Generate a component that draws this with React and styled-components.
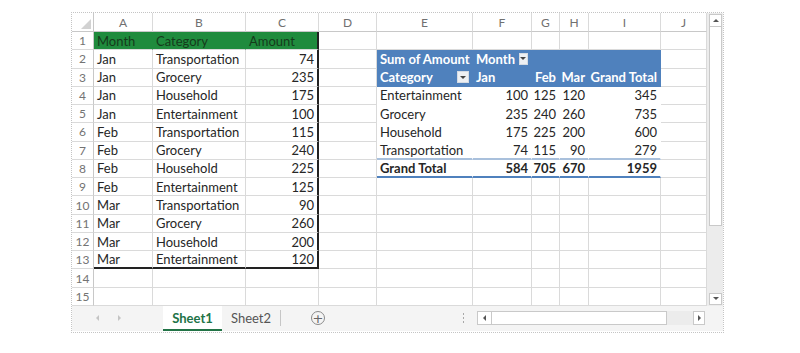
import React from 'react';
import styled, { createGlobalStyle, css } from 'styled-components';

const GlobalStyle = createGlobalStyle`
  html, body {
    margin: 0;
    padding: 0;
    background: #fff;
  }
  body {
    font-family: Lato, "Liberation Sans", sans-serif;
  }
`;

const GRID = '#dadada';
const BLUE = '#4f81bd';

const Page = styled.div`
  width: 800px;
  height: 353px;
  padding: 12px 0 0 71px;
  box-sizing: border-box;
`;

const Workbook = styled.div`
  width: 653px;
  height: 321px;
  box-sizing: border-box;
  border: 1px dotted #c4c4c4;
  display: flex;
  flex-direction: column;
  background: #fff;
`;

const Body = styled.div`
  display: flex;
`;

const Grid = styled.div`
  display: grid;
  grid-template-columns: 22px 59px 93px 73px 58px 96px 59px 28px 29px 72px 46px;
  grid-template-rows: 19px repeat(15, 18.27px);
`;

const Corner = styled.div`
  box-sizing: border-box;
  display: flex;
  align-items: flex-end;
  justify-content: flex-end;
  padding: 0 2px 2px 0;
  border-right: 1px solid #c8c8c8;
  border-bottom: 1px solid #c8c8c8;
`;

const CornerMark = styled.span`
  width: 0;
  height: 0;
  border-left: 10px solid transparent;
  border-bottom: 10px solid #d2d2d2;
`;

const ColHead = styled.div`
  box-sizing: border-box;
  display: flex;
  align-items: center;
  justify-content: center;
  font-size: 12px;
  color: #707070;
  border-right: 1px solid ${GRID};
  border-bottom: 1px solid #c8c8c8;
`;

const RowHead = styled.div`
  box-sizing: border-box;
  display: flex;
  align-items: center;
  justify-content: center;
  font-size: 12px;
  color: #737373;
  border-right: 1px solid #c8c8c8;
  border-bottom: 1px solid ${GRID};
`;

const Cell = styled.div`
  box-sizing: border-box;
  display: flex;
  align-items: center;
  justify-content: ${(p) => (p.$align === 'right' ? 'flex-end' : p.$align === 'between' ? 'space-between' : 'flex-start')};
  gap: 4px;
  padding: 0 3px;
  font-size: 13px;
  white-space: nowrap;
  color: #262626;
  background: #fff;
  border-right: 1px solid ${GRID};
  border-bottom: 1px solid ${GRID};
  font-weight: ${(p) => (p.$bold ? 700 : 400)};

  ${(p) => p.$variant === 'green' && css`
    background: #1f8b3d;
    color: #153a1b;
    border-right-color: #1f8b3d;
  `}
  ${(p) => p.$variant === 'pivotHead' && css`
    background: ${BLUE};
    color: #fff;
    font-weight: 700;
    border-right-color: ${BLUE};
    border-bottom-color: ${BLUE};
  `}
  ${(p) => p.$variant === 'pivotBody' && css`
    border-right-color: #fff;
    border-bottom-color: #fff;
  `}
  ${(p) => p.$variant === 'pivotLast' && css`
    border-right-color: #fff;
    border-bottom: 2px solid #a9c0dc;
  `}
  ${(p) => p.$variant === 'pivotTotal' && css`
    font-weight: 700;
    border-right-color: #fff;
    border-bottom: 2px solid ${BLUE};
  `}
  ${(p) => p.$thickRight && css`
    border-right: 2px solid #222;
  `}
  ${(p) => p.$thickBottom && css`
    border-bottom: 2px solid #222;
  `}
`;

const Dropdown = styled.span`
  box-sizing: border-box;
  width: 12px;
  height: 12px;
  background: #eef0f3;
  border: 1px solid #d5dbe3;
  display: flex;
  align-items: center;
  justify-content: center;

  &::after {
    content: '';
    width: 0;
    height: 0;
    border-left: 3px solid transparent;
    border-right: 3px solid transparent;
    border-top: 3px solid #444;
  }
`;

const VScroll = styled.div`
  width: 16px;
  box-sizing: border-box;
  display: flex;
  flex-direction: column;
  align-items: center;
  padding: 1px 0 1px 1px;
  background: #ececec;
`;

const ScrollBtn = styled.div`
  box-sizing: border-box;
  width: ${(p) => p.$w || 13}px;
  height: ${(p) => p.$h || 13}px;
  background: #fff;
  border: 1px solid #c9c9c9;
  display: flex;
  align-items: center;
  justify-content: center;
  flex-shrink: 0;

  &::after {
    content: '';
    width: 0;
    height: 0;
    ${(p) => p.$dir === 'up' && css`
      border-left: 3px solid transparent;
      border-right: 3px solid transparent;
      border-bottom: 3px solid #555;
    `}
    ${(p) => p.$dir === 'down' && css`
      border-left: 3px solid transparent;
      border-right: 3px solid transparent;
      border-top: 3px solid #555;
    `}
    ${(p) => p.$dir === 'left' && css`
      border-top: 3px solid transparent;
      border-bottom: 3px solid transparent;
      border-right: 3px solid #555;
    `}
    ${(p) => p.$dir === 'right' && css`
      border-top: 3px solid transparent;
      border-bottom: 3px solid transparent;
      border-left: 3px solid #555;
    `}
  }
`;

const VThumb = styled.div`
  box-sizing: border-box;
  width: 13px;
  height: 199px;
  background: #fff;
  border: 1px solid #c9c9c9;
  border-top: none;
`;

const Spacer = styled.div`
  flex: 1;
`;

const TabBar = styled.div`
  height: 25px;
  display: flex;
  align-items: stretch;
  background: #f4f4f4;
`;

const Nav = styled.div`
  width: 91px;
  display: flex;
  align-items: center;
  gap: 19px;
  padding-left: 24px;
  box-sizing: border-box;
`;

const NavArrow = styled.span`
  width: 0;
  height: 0;
  border-top: 3px solid transparent;
  border-bottom: 3px solid transparent;
  ${(p) => (p.$dir === 'left'
    ? css`border-right: 3px solid #c4c4c4;`
    : css`border-left: 3px solid #c4c4c4;`)}
`;

const Tab = styled.div`
  width: ${(p) => p.$w}px;
  box-sizing: border-box;
  display: flex;
  align-items: center;
  justify-content: center;
  font-size: 13px;
  ${(p) => (p.$active
    ? css`
      background: #fff;
      color: #217346;
      font-weight: 700;
      border-bottom: 2px solid #217346;
      padding-top: 2px;
    `
    : css`
      color: #555;
    `)}
`;

const TabSep = styled.span`
  width: 1px;
  align-self: center;
  height: 16px;
  background: #c6c6c6;
`;

const AddSheet = styled.div`
  align-self: center;
  margin-left: 30px;
  width: 14px;
  height: 14px;
  box-sizing: border-box;
  border: 1px solid #8a8a8a;
  border-radius: 50%;
  display: flex;
  align-items: center;
  justify-content: center;
  color: #666;
  font-size: 13px;
  line-height: 1;
  font-family: "DejaVu Sans", sans-serif;
`;

const Dots = styled.div`
  align-self: center;
  display: flex;
  flex-direction: column;
  gap: 2px;
  margin-right: 13px;

  span {
    width: 1px;
    height: 2px;
    background: #a8a8a8;
  }
`;

const HScroll = styled.div`
  align-self: center;
  width: 228px;
  height: 14px;
  margin-right: 18px;
  display: flex;
  background: #ececec;
`;

const HThumb = styled.div`
  width: 175px;
  box-sizing: border-box;
  background: #fff;
  border: 1px solid #c9c9c9;
  border-left: none;
`;

const colHeads = ['A', 'B', 'C', 'D', 'E', 'F', 'G', 'H', 'I', 'J'];

const records = [
  ['Jan', 'Transportation', 74],
  ['Jan', 'Grocery', 235],
  ['Jan', 'Household', 175],
  ['Jan', 'Entertainment', 100],
  ['Feb', 'Transportation', 115],
  ['Feb', 'Grocery', 240],
  ['Feb', 'Household', 225],
  ['Feb', 'Entertainment', 125],
  ['Mar', 'Transportation', 90],
  ['Mar', 'Grocery', 260],
  ['Mar', 'Household', 200],
  ['Mar', 'Entertainment', 120],
];

const pivot = [
  ['Entertainment', 100, 125, 120, 345],
  ['Grocery', 235, 240, 260, 735],
  ['Household', 175, 225, 200, 600],
  ['Transportation', 74, 115, 90, 279],
  ['Grand Total', 584, 705, 670, 1959],
];

// describe what sits in row r (1-based), column c (0 = A)
const cellFor = (r, c) => {
  const cell = { text: '', align: 'left' };

  // source table A1:C13
  if (c <= 2 && r <= 13) {
    if (r === 1) {
      cell.text = ['Month', 'Category', 'Amount'][c];
      cell.variant = 'green';
    } else {
      cell.text = records[r - 2][c];
      if (c === 2) cell.align = 'right';
    }
    if (c === 2) cell.thickRight = true;
    if (r === 13) cell.thickBottom = true;
    return cell;
  }

  // pivot table E2:I8
  if (c >= 4 && c <= 8 && r >= 2 && r <= 8) {
    const pc = c - 4;
    if (r === 2) {
      cell.variant = 'pivotHead';
      if (pc === 0) cell.text = 'Sum of Amount';
      if (pc === 1) {
        cell.text = 'Month';
        cell.dropdown = true;
      }
    } else if (r === 3) {
      cell.variant = 'pivotHead';
      cell.text = ['Category', 'Jan', 'Feb', 'Mar', 'Grand Total'][pc];
      if (pc === 0) {
        cell.dropdown = true;
        cell.align = 'between';
      }
      if (pc >= 2) cell.align = 'right';
    } else {
      const row = pivot[r - 4];
      cell.text = row[pc];
      if (pc > 0) cell.align = 'right';
      cell.variant = r === 8 ? 'pivotTotal' : r === 7 ? 'pivotLast' : 'pivotBody';
      if (pc === 4 && r < 7) cell.variant = 'pivotBody';
    }
    return cell;
  }

  return cell;
};

const rows = Array.from({ length: 15 }, (_, i) => i + 1);

export default function App() {
  return (
    <Page>
      <GlobalStyle />
      <Workbook>
        <Body>
          <Grid>
            <Corner>
              <CornerMark />
            </Corner>
            {colHeads.map((h) => (
              <ColHead key={h}>{h}</ColHead>
            ))}
            {rows.map((r) => (
              <React.Fragment key={r}>
                <RowHead>{r}</RowHead>
                {colHeads.map((h, c) => {
                  const cell = cellFor(r, c);
                  return (
                    <Cell
                      key={h}
                      $align={cell.align}
                      $variant={cell.variant}
                      $thickRight={cell.thickRight}
                      $thickBottom={cell.thickBottom}
                    >
                      {cell.text}
                      {cell.dropdown && <Dropdown />}
                    </Cell>
                  );
                })}
              </React.Fragment>
            ))}
          </Grid>
          <VScroll>
            <ScrollBtn $dir="up" />
            <VThumb />
            <Spacer />
            <ScrollBtn $dir="down" $h={12} />
          </VScroll>
        </Body>
        <TabBar>
          <Nav>
            <NavArrow $dir="left" />
            <NavArrow $dir="right" />
          </Nav>
          <Tab $w={59} $active>Sheet1</Tab>
          <Tab $w={58}>Sheet2</Tab>
          <TabSep />
          <AddSheet>+</AddSheet>
          <Spacer />
          <Dots>
            <span />
            <span />
            <span />
          </Dots>
          <HScroll>
            <ScrollBtn $dir="left" $w={15} $h={14} />
            <HThumb />
            <Spacer />
            <ScrollBtn $dir="right" $w={12} $h={14} />
          </HScroll>
        </TabBar>
      </Workbook>
    </Page>
  );
}
